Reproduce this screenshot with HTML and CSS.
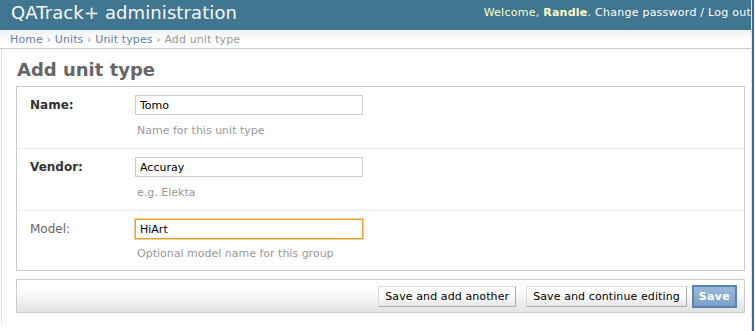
FILE: index.html
```html
<!DOCTYPE html>
<html>
<head>
    <title>Add unit type | QATrack+ administration</title>
    <link rel="stylesheet" href="styles.css">
</head>
<body>
    <div class="container">
        <div id="header">
            <div class="branding">QATrack+ administration</div>
            <div class="user-tools">
                <span class="welcome">Welcome, <strong>Randle</strong>.</span>
                <a href="#">Change password</a> / <a href="#">Log out</a>
            </div>
        </div>
        <div class="breadcrumbs">
            <a href="#">Home</a> &rsaquo; <a href="#">Units</a> &rsaquo; <a href="#">Unit types</a> &rsaquo; Add unit type
        </div>

        <div id="content">
            <h1>Add unit type</h1>
            <form id="unittype_form">
                <fieldset class="module aligned">
                    <div class="form-row">
                        <label class="required" for="id_name">Name:</label>
                        <div class="field">
                            <input type="text" id="id_name" name="name" value="Tomo" />
                            <p class="help">Name for this unit type</p>
                        </div>
                    </div>
                    <div class="form-row">
                        <label class="required" for="id_vendor">Vendor:</label>
                        <div class="field">
                            <input type="text" id="id_vendor" name="vendor" value="Accuray" />
                            <p class="help">e.g. Elekta</p>
                        </div>
                    </div>
                    <div class="form-row last">
                        <label for="id_model">Model:</label>
                        <div class="field">
                            <input type="text" id="id_model" name="model" value="HiArt" class="focused" />
                            <p class="help">Optional model name for this group</p>
                        </div>
                    </div>
                </fieldset>

                <div class="submit-row">
                    <input type="submit" value="Save and add another" name="_addanother" />
                    <input type="submit" value="Save and continue editing" name="_continue" />
                    <input type="submit" value="Save" class="default" name="_save" />
                </div>
            </form>
        </div>
    </div>
</body>
</html>
```

FILE: styles.css
```css
body {
    margin: 0;
    padding: 0;
    font-family: "DejaVu Sans", Verdana, sans-serif;
    font-size: 12px;
    color: #333;
    background: #fff;
}
a {
    color: #5b80b2;
    text-decoration: none;
}
.container {
    width: 752px;
    min-height: 331px;
    border-right: 1px solid #e8e8e8;
    box-shadow: 2px 0 0 #3a62b4;
    box-sizing: border-box;
}
#header {
    display: flex;
    justify-content: space-between;
    align-items: flex-start;
    height: 30px;
    background: #417690;
    color: #ffc;
}
.branding {
    padding: 2px 11px 0;
    font-size: 18px;
    line-height: 22px;
    letter-spacing: 0.1px;
    color: #f7f7f7;
}
.user-tools {
    padding-top: 6px;
    font-size: 11px;
    line-height: 14px;
    letter-spacing: 0.25px;
    color: #fff;
    white-space: nowrap;
}
.user-tools .welcome {
    color: #ffc;
}
.user-tools a {
    color: #fff;
}
.breadcrumbs {
    height: 19px;
    padding: 0 10px;
    font-size: 11px;
    line-height: 19px;
    letter-spacing: 0.12px;
    color: #999;
    background: linear-gradient(#eee, #fff 10px);
    border-bottom: 1px solid #ccc;
    box-sizing: border-box;
}
#content {
    border-left: 1px solid #ddd;
    margin-left: 1px;
    padding: 10px 6px 10px 14px;
}
#content h1 {
    margin: 0 0 5px 1px;
    font-size: 18px;
    line-height: 22px;
    color: #666;
}
fieldset.module {
    margin: 0;
    padding: 0;
    border: 1px solid #ccc;
}
.form-row {
    display: flex;
    padding: 8px 10px 0 13px;
    height: 53px;
    border-bottom: 1px solid #eee;
}
.form-row.last {
    border-bottom: none;
    height: 51px;
}
.form-row label {
    width: 105px;
    padding-top: 3px;
    color: #666;
}
.form-row label.required {
    font-weight: bold;
    color: #333;
}
.field input {
    width: 228px;
    height: 20px;
    margin: 0;
    padding: 2px 4px;
    font-family: "DejaVu Sans", Verdana, sans-serif;
    font-size: 11px;
    color: #000;
    border: 1px solid #ccc;
    box-sizing: border-box;
    outline: none;
}
.field input.focused {
    border: 1px solid #e5a33a;
    box-shadow: 0 0 0 1px #f4d08c;
}
.help {
    margin: 9px 0 0 2px;
    font-size: 11px;
    line-height: 13px;
    color: #999;
}
.form-row.last .help {
    margin-top: 8px;
}
.submit-row {
    display: flex;
    justify-content: flex-end;
    align-items: center;
    gap: 10px;
    margin-top: 8px;
    height: 34px;
    padding: 0 7px;
    border: 1px solid #ccc;
    background: linear-gradient(#fff 30%, #e2e2e2);
    box-sizing: border-box;
}
.submit-row input {
    height: 21px;
    padding: 0 6px;
    font-family: "DejaVu Sans", Verdana, sans-serif;
    font-size: 11px;
    letter-spacing: 0.1px;
    color: #000;
    background: linear-gradient(#fff 40%, #e6e6e6);
    border: 1px solid;
    border-color: #ddd #aaa #aaa #ddd;
    cursor: pointer;
}
.submit-row input.default {
    margin-left: -5px;
    height: 23px;
    padding: 0 5px;
    font-weight: bold;
    letter-spacing: 0.3px;
    color: #fff;
    background: linear-gradient(#9bb8d8, #7ca0c7);
    border: 2px solid #5b80b2;
}
```
